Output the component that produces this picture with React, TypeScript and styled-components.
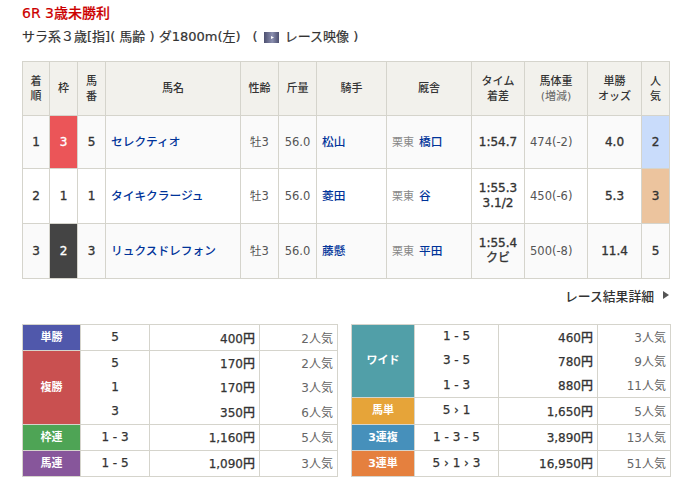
import React from "react";
import styled, { createGlobalStyle } from "styled-components";

const Global = createGlobalStyle`
  html, body {
    margin: 0;
    padding: 0;
    background: #fff;
    color: #333;
    font-family: "DejaVu Sans", "Noto Sans CJK JP", sans-serif;
    font-size: 12px;
  }
`;

const Page = styled.div`
  width: 687px;
  height: 486px;
  overflow: hidden;
  padding: 4px 0 0 22px;
  box-sizing: border-box;
`;

const RaceName = styled.h1`
  margin: 0;
  font-size: 14px;
  font-weight: 500;
  line-height: 18px;
  color: #c00;
  -webkit-text-stroke: 0.2px #c00;
`;

const RaceInfo = styled.p`
  margin: 5px 0 0;
  font-size: 13px;
  line-height: 20px;
  color: #333;
  -webkit-text-stroke: 0.2px #333;
  display: flex;
  align-items: center;
`;

const Paren = styled.span`
  margin-left: 12px;
`;

const MovieIcon = styled.svg`
  width: 15px;
  height: 11px;
  margin: 0 6px 0 6px;
`;

const ResultTable = styled.table`
  margin-top: 14px;
  width: 648px;
  table-layout: fixed;
  border-collapse: collapse;
  border: 1px solid #d5d4cc;
`;

const Head = styled.th`
  background: #f2f1ec;
  border: 1px solid #d5d4cc;
  height: 53px;
  padding: 0;
  font-size: 11px;
  font-weight: 500;
  line-height: 15px;
  color: #333;
  small {
    font-size: 11px;
    font-weight: 400;
    color: #666;
  }
`;

const Row = styled.tr<{ $odd?: boolean; $h: number }>`
  height: ${(p) => p.$h}px;
  background: ${(p) => (p.$odd ? "#fafafa" : "#fff")};
`;

const Cell = styled.td<{ $strong?: boolean; $bg?: string; $color?: string }>`
  border: 1px solid #d5d4cc;
  padding: 0;
  text-align: center;
  font-size: ${(p) => (p.$strong ? "12px" : "11.5px")};
  background: ${(p) => p.$bg ?? "transparent"};
  color: ${(p) => p.$color ?? (p.$strong ? "#333" : "#555")};
  -webkit-text-stroke: ${(p) => (p.$strong ? "0.35px" : "0")};
  line-height: 15px;
`;

const TextCell = styled(Cell)<{ $pad?: number }>`
  text-align: left;
  padding-left: ${(p) => p.$pad ?? 5}px;
`;

const NameLink = styled.a`
  color: #039;
  font-weight: 500;
  font-size: 11.7px;
`;

const Stable = styled.span`
  color: #888;
  font-size: 11px;
  margin-right: 5px;
`;

const More = styled.div`
  display: flex;
  justify-content: flex-end;
  align-items: center;
  gap: 9px;
  width: 648px;
  height: 18px;
  margin-top: 7px;
  font-size: 12.8px;
  font-weight: 500;
  color: #333;
  &::after {
    content: "";
    border-left: 6px solid #555;
    border-top: 4px solid transparent;
    border-bottom: 4px solid transparent;
    margin-right: 1px;
  }
`;

const Payouts = styled.div`
  display: flex;
  gap: 13px;
  margin-top: 20px;
`;

const PayTable = styled.table<{ $w: number }>`
  width: ${(p) => p.$w}px;
  table-layout: fixed;
  border-collapse: collapse;
  border: 1px solid #d5d4cc;
`;

const Kind = styled.th<{ $bg: string }>`
  background: ${(p) => p.$bg};
  color: #fff;
  border: 1px solid #d5d4cc;
  padding: 0 0 3px;
  font-size: 11px;
  font-weight: 700;
`;

const PayCell = styled.td<{ $kind: "num" | "yen" | "pop" }>`
  padding: 0 ${(p) => (p.$kind === "num" ? 0 : 4)}px 1px 0;
  border-left: 1px solid #d5d4cc;
  border-right: 1px solid #d5d4cc;
  text-align: ${(p) => (p.$kind === "num" ? "center" : "right")};
  color: ${(p) => (p.$kind === "pop" ? "#666" : "#333")};
  font-weight: ${(p) => (p.$kind === "pop" ? 400 : 500)};
  font-size: 12px;
  -webkit-text-stroke: ${(p) => (p.$kind === "pop" ? "0" : "0.25px")};
`;

const Line = styled.tr<{ $h: number; $end?: boolean }>`
  height: ${(p) => p.$h}px;
  td {
    border-bottom: ${(p) => (p.$end ? "1px solid #d5d4cc" : "none")};
  }
`;

type Runner = {
  pos: number; frame: number; frameBg?: string; no: number; name: string;
  jockey: string; trainer: string; time: string; margin?: string;
  weight: string; odds: string; pop: number; popBg?: string; h: number;
};

const runners: Runner[] = [
  { pos: 1, frame: 3, frameBg: "#eb5558", no: 5, name: "セレクティオ", jockey: "松山", trainer: "橋口", time: "1:54.7", weight: "474(-2)", odds: "4.0", pop: 2, popBg: "#c9dcfb", h: 53 },
  { pos: 2, frame: 1, no: 1, name: "タイキクラージュ", jockey: "菱田", trainer: "谷", time: "1:55.3", margin: "3.1/2", weight: "450(-6)", odds: "5.3", pop: 3, popBg: "#ecc49e", h: 55 },
  { pos: 3, frame: 2, frameBg: "#444", no: 3, name: "リュクスドレフォン", jockey: "藤懸", trainer: "平田", time: "1:55.4", margin: "クビ", weight: "500(-8)", odds: "11.4", pop: 5, h: 55 },
];

const resultCols = [27, 28, 28, 135, 38, 38, 70, 85, 53, 63, 54, 28];

type Pay = { kind: string; bg: string; h?: number; rows: [string, string, string][] };

const leftPays: Pay[] = [
  { kind: "単勝", bg: "#5058ab", rows: [["5", "400円", "2人気"]] },
  { kind: "複勝", bg: "#c95050", rows: [["5", "170円", "2人気"], ["1", "170円", "3人気"], ["3", "350円", "6人気"]] },
  { kind: "枠連", bg: "#4ea455", rows: [["1 - 3", "1,160円", "5人気"]] },
  { kind: "馬連", bg: "#87569b", rows: [["1 - 5", "1,090円", "3人気"]] },
];

const rightPays: Pay[] = [
  { kind: "ワイド", bg: "#519fa8", rows: [["1 - 5", "460円", "3人気"], ["3 - 5", "780円", "9人気"], ["1 - 3", "880円", "11人気"]] },
  { kind: "馬単", bg: "#e6a439", h: 27, rows: [["5 › 1", "1,650円", "5人気"]] },
  { kind: "3連複", bg: "#4690bb", rows: [["1 - 3 - 5", "3,890円", "13人気"]] },
  { kind: "3連単", bg: "#e5803e", rows: [["5 › 1 › 3", "16,950円", "51人気"]] },
];

const PayBlock: React.FC<{ pays: Pay[]; cols: number[]; rowH: number }> = ({ pays, cols, rowH }) => (
  <PayTable $w={cols.reduce((a, b) => a + b, 0)}>
    <colgroup>
      {cols.map((c, i) => (
        <col key={i} style={{ width: c }} />
      ))}
    </colgroup>
    <tbody>
      {pays.flatMap((p) =>
        p.rows.map((r, i) => (
          <Line key={p.kind + i} $h={p.rows.length > 1 ? rowH : p.h ?? 26} $end={i === p.rows.length - 1}>
            {i === 0 && (
              <Kind $bg={p.bg} rowSpan={p.rows.length}>
                {p.kind}
              </Kind>
            )}
            <PayCell $kind="num">{r[0]}</PayCell>
            <PayCell $kind="yen">{r[1]}</PayCell>
            <PayCell $kind="pop">{r[2]}</PayCell>
          </Line>
        ))
      )}
    </tbody>
  </PayTable>
);

export default function App() {
  return (
    <Page>
      <Global />
      <RaceName>6R 3歳未勝利</RaceName>
      <RaceInfo>
        サラ系３歳[指]( 馬齢 ) ダ1800m(左)
        <Paren>(</Paren>
        <MovieIcon viewBox="0 0 15 11">
          <defs>
            <linearGradient id="movieFill" x1="0" x2="1" y1="0" y2="0">
              <stop offset="0" stopColor="#4d5070" />
              <stop offset="0.55" stopColor="#8b8fb0" />
              <stop offset="1" stopColor="#4d5070" />
            </linearGradient>
          </defs>
          <rect width="15" height="11" fill="url(#movieFill)" />
          <path d="M7 4l3 1.5-3 1.5z" fill="#fff" />
        </MovieIcon>
        レース映像 )
      </RaceInfo>
      <ResultTable>
        <colgroup>
          {resultCols.map((c, i) => (
            <col key={i} style={{ width: c }} />
          ))}
        </colgroup>
        <thead>
          <tr>
            <Head>着<br />順</Head>
            <Head>枠</Head>
            <Head>馬<br />番</Head>
            <Head>馬名</Head>
            <Head>性齢</Head>
            <Head>斤量</Head>
            <Head>騎手</Head>
            <Head>厩舎</Head>
            <Head>タイム<br />着差</Head>
            <Head>馬体重<br /><small>(増減)</small></Head>
            <Head>単勝<br />オッズ</Head>
            <Head>人<br />気</Head>
          </tr>
        </thead>
        <tbody>
          {runners.map((r, i) => (
            <Row key={r.pos} $odd={i % 2 === 0} $h={r.h}>
              <Cell $strong>{r.pos}</Cell>
              <Cell $strong $bg={r.frameBg} $color={r.frameBg ? "#fff" : undefined}>{r.frame}</Cell>
              <Cell $strong>{r.no}</Cell>
              <TextCell><NameLink>{r.name}</NameLink></TextCell>
              <Cell>牡3</Cell>
              <Cell>56.0</Cell>
              <TextCell><NameLink>{r.jockey}</NameLink></TextCell>
              <TextCell><Stable>栗東</Stable><NameLink>{r.trainer}</NameLink></TextCell>
              <Cell $strong>{r.time}{r.margin && <><br />{r.margin}</>}</Cell>
              <TextCell $pad={5}>{r.weight}</TextCell>
              <Cell $strong>{r.odds}</Cell>
              <Cell $strong $bg={r.popBg}>{r.pop}</Cell>
            </Row>
          ))}
        </tbody>
      </ResultTable>
      <More>レース結果詳細</More>
      <Payouts>
        <PayBlock pays={leftPays} cols={[58, 69, 110, 78]} rowH={24.67} />
        <PayBlock pays={rightPays} cols={[63, 84, 99, 73]} rowH={24.33} />
      </Payouts>
    </Page>
  );
}
